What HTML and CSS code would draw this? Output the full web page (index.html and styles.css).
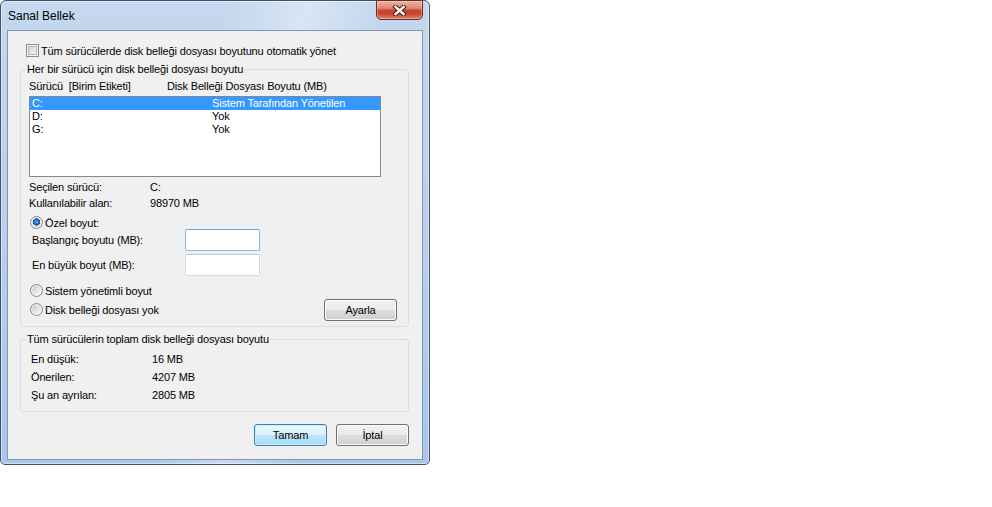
FILE: index.html
```html
<!DOCTYPE html>
<html lang="tr">
<head>
    <meta charset="UTF-8">
    <meta name="viewport" content="width=device-width, initial-scale=1.0">
    <title>Sanal Bellek</title>
    <link rel="stylesheet" href="styles.css">
</head>
<body>
    <!-- Dialog Window -->
    <div class="window">
        <div class="titlebar">
            <span class="title">Sanal Bellek</span>
            <button class="close-btn" aria-label="Kapat">
                <svg width="15" height="11" viewBox="0 0 15 11">
                    <path d="M3.5 2 L11.5 9 M11.5 2 L3.5 9" stroke="#4b1b12" stroke-width="4.4" stroke-linecap="square" fill="none"/>
                    <path d="M3.5 2 L11.5 9 M11.5 2 L3.5 9" stroke="#ffffff" stroke-width="2.4" stroke-linecap="square" fill="none"/>
                </svg>
            </button>
        </div>

        <div class="client">
            <label class="check-row"><span class="checkbox"></span>Tüm sürücülerde disk belleği dosyası boyutunu otomatik yönet</label>

            <!-- Per drive settings -->
            <fieldset class="group group-drives">
                <legend>Her bir sürücü için disk belleği dosyası boyutu</legend>
                <div class="list-header">
                    <span class="header-drive">Sürücü  [Birim Etiketi]</span>
                    <span>Disk Belleği Dosyası Boyutu (MB)</span>
                </div>
                <div class="drive-list">
                    <div class="drive-row selected"><span class="row-drive">C:</span><span>Sistem Tarafından Yönetilen</span></div>
                    <div class="drive-row"><span class="row-drive">D:</span><span>Yok</span></div>
                    <div class="drive-row"><span class="row-drive">G:</span><span>Yok</span></div>
                </div>

                <div class="info-row first"><span class="info-label">Seçilen sürücü:</span><span>C:</span></div>
                <div class="info-row"><span class="info-label">Kullanılabilir alan:</span><span>98970 MB</span></div>

                <div class="radio-row custom"><span class="radio checked"></span>Özel boyut:</div>
                <div class="size-row"><span class="size-label">Başlangıç boyutu (MB):</span><input class="size-input focused" type="text"></div>
                <div class="size-row second"><span class="size-label">En büyük boyut (MB):</span><input class="size-input" type="text"></div>

                <div class="option-row">
                    <div class="option-list">
                        <div class="radio-row"><span class="radio"></span>Sistem yönetimli boyut</div>
                        <div class="radio-row last"><span class="radio"></span>Disk belleği dosyası yok</div>
                    </div>
                    <button class="btn set-btn">Ayarla</button>
                </div>
            </fieldset>

            <!-- Totals -->
            <fieldset class="group group-total">
                <legend>Tüm sürücülerin toplam disk belleği dosyası boyutu</legend>
                <div class="total-row first"><span class="total-label">En düşük:</span><span>16 MB</span></div>
                <div class="total-row"><span class="total-label">Önerilen:</span><span>4207 MB</span></div>
                <div class="total-row"><span class="total-label">Şu an ayrılan:</span><span>2805 MB</span></div>
            </fieldset>

            <div class="button-row">
                <button class="btn btn-default">Tamam</button>
                <button class="btn">İptal</button>
            </div>
        </div>
    </div>
</body>
</html>
```

FILE: styles.css
```css
/* General Page Styling */
body {
    margin: 0;
    background: #ffffff;
    font-family: 'Liberation Sans', Arial, sans-serif;
    font-size: 11px;
    letter-spacing: -0.15px;
    color: #000000;
}

/* Window Frame */
.window {
    width: 430px;
    height: 465px;
    box-sizing: border-box;
    border: 1px solid #41536a;
    border-radius: 6px 6px 5px 5px;
    background:
        linear-gradient(100deg, rgba(255, 255, 255, 0) 45%, rgba(255, 255, 255, 0.35) 60%, rgba(255, 255, 255, 0) 75%),
        linear-gradient(to bottom, #c4d8ef 0%, #b7cfeb 55%, #a9c6e8 100%);
    box-shadow: inset 0 0 0 1px rgba(255, 255, 255, 0.45);
}

.titlebar {
    display: flex;
    align-items: center;
    justify-content: space-between;
    height: 29px;
    padding-left: 7px;
}

.title {
    font-size: 12px;
    letter-spacing: 0;
    color: #000000;
}

.close-btn {
    align-self: flex-start;
    width: 47px;
    height: 20px;
    margin-top: -1px;
    margin-right: 6px;
    padding: 0;
    display: flex;
    align-items: center;
    justify-content: center;
    border: 1px solid #6a2a20;
    border-radius: 0 0 5px 5px;
    background: linear-gradient(to bottom, #eab0a2 0%, #dd8a76 40%, #c8442e 52%, #c9432c 70%, #e08a6a 100%);
    box-shadow: inset 0 0 0 1px rgba(255, 255, 255, 0.3);
}

/* Client Area */
.client {
    width: 416px;
    height: 430px;
    margin: 0 6px;
    box-sizing: border-box;
    border: 1px solid #8196b0;
    background-color: #f0f0f0;
    padding: 13px 13px 0 12px;
}

.check-row {
    display: flex;
    align-items: center;
    gap: 2px;
    height: 13px;
    margin-left: 6px;
}

.checkbox {
    width: 13px;
    height: 13px;
    box-sizing: border-box;
    border: 1px solid #8e8f8f;
    background: linear-gradient(135deg, #c9ccd1 0%, #e9eaeb 60%, #f7f7f7 100%);
    box-shadow: inset 0 0 0 1px #f4f4f4, inset 0 0 0 2px #b4b7bb;
}

/* Group Boxes */
.group {
    margin: 6px 0 0 0;
    border: 1px solid #d5dfe5;
    border-radius: 3px;
    min-width: 0;
}

.group legend {
    padding: 0 1px;
    line-height: 13px;
}

.group-drives {
    padding: 0 11px 5px 8px;
}

.group-drives legend {
    margin-left: -3px;
}

.group-total {
    padding: 0 10px 7px 10px;
}

.group-total legend {
    margin-left: -5px;
}

/* Drive List */
.list-header {
    display: flex;
    line-height: 13px;
    margin-top: 4px;
}

.header-drive {
    width: 138px;
    white-space: pre;
}

.drive-list {
    width: 352px;
    height: 81px;
    margin-top: 3px;
    box-sizing: border-box;
    border: 1px solid #828790;
    background: #ffffff;
}

.drive-row {
    display: flex;
    height: 13px;
    line-height: 13px;
}

.drive-row.selected {
    background-color: #3399ff;
    color: #ffffff;
}

.row-drive {
    width: 182px;
    padding-left: 2px;
    box-sizing: border-box;
}

/* Info Rows */
.info-row {
    display: flex;
    height: 16px;
    line-height: 16px;
}

.info-row.first {
    margin-top: 2px;
}

.info-label {
    width: 121px;
}

/* Radios */
.radio-row {
    display: flex;
    align-items: center;
    gap: 2px;
    height: 13px;
    margin-left: 1px;
}

.radio-row.custom {
    margin-top: 5px;
}

.radio-row.last {
    margin-top: 6px;
}

.radio {
    width: 13px;
    height: 13px;
    box-sizing: border-box;
    border-radius: 50%;
    border: 1px solid #8a8a8a;
    background: linear-gradient(135deg, #c4c4c4 0%, #e6e6e6 55%, #fbfbfb 100%);
    box-shadow: inset 0 0 0 1px #f2f2f2;
}

.radio.checked {
    background: radial-gradient(circle at 50% 45%, #7cc4f6 0, #2d7fd6 1.6px, #134f9e 3.4px, #e4e4e4 3.9px, #d8d8d8 4.6px, #f6f6f6 6px);
}

/* Size Inputs */
.size-row {
    display: flex;
    align-items: center;
    height: 22px;
    margin-left: 3px;
}

.size-row.second {
    margin-top: 3px;
}

.size-label {
    width: 153px;
}

.size-input {
    width: 75px;
    height: 22px;
    box-sizing: border-box;
    margin: 0;
    border: 1px solid #d4d9e1;
    border-top-color: #c3c8d0;
    border-radius: 2px;
    background: #ffffff;
}

.size-input.focused {
    border-color: #8bb6e2;
    border-top-color: #6ea2d8;
}

.option-row {
    display: flex;
    justify-content: space-between;
    margin-top: 8px;
}

.set-btn {
    margin-top: 15px;
}

/* Totals */
.total-row {
    display: flex;
    height: 18px;
    line-height: 18px;
}

.total-row.first {
    margin-top: 4px;
}

.total-label {
    width: 121px;
}

/* Buttons */
.btn {
    width: 73px;
    height: 22px;
    padding: 0;
    font-family: inherit;
    font-size: 11px;
    letter-spacing: -0.15px;
    color: #000000;
    border: 1px solid #707070;
    border-radius: 3px;
    background: linear-gradient(to bottom, #f2f2f2 0%, #ebebeb 48%, #dddddd 52%, #cfcfcf 100%);
    box-shadow: inset 0 0 0 1px #fcfcfc;
}

.btn-default {
    border-color: #3c7fb1;
    background: linear-gradient(to bottom, #eaf6fd 0%, #d9f0fc 48%, #bee6fd 52%, #a7d9f5 100%);
    box-shadow: inset 0 0 0 1px #c6ecff;
}

.button-row {
    display: flex;
    justify-content: flex-end;
    gap: 9px;
    margin-top: 12px;
}
```
